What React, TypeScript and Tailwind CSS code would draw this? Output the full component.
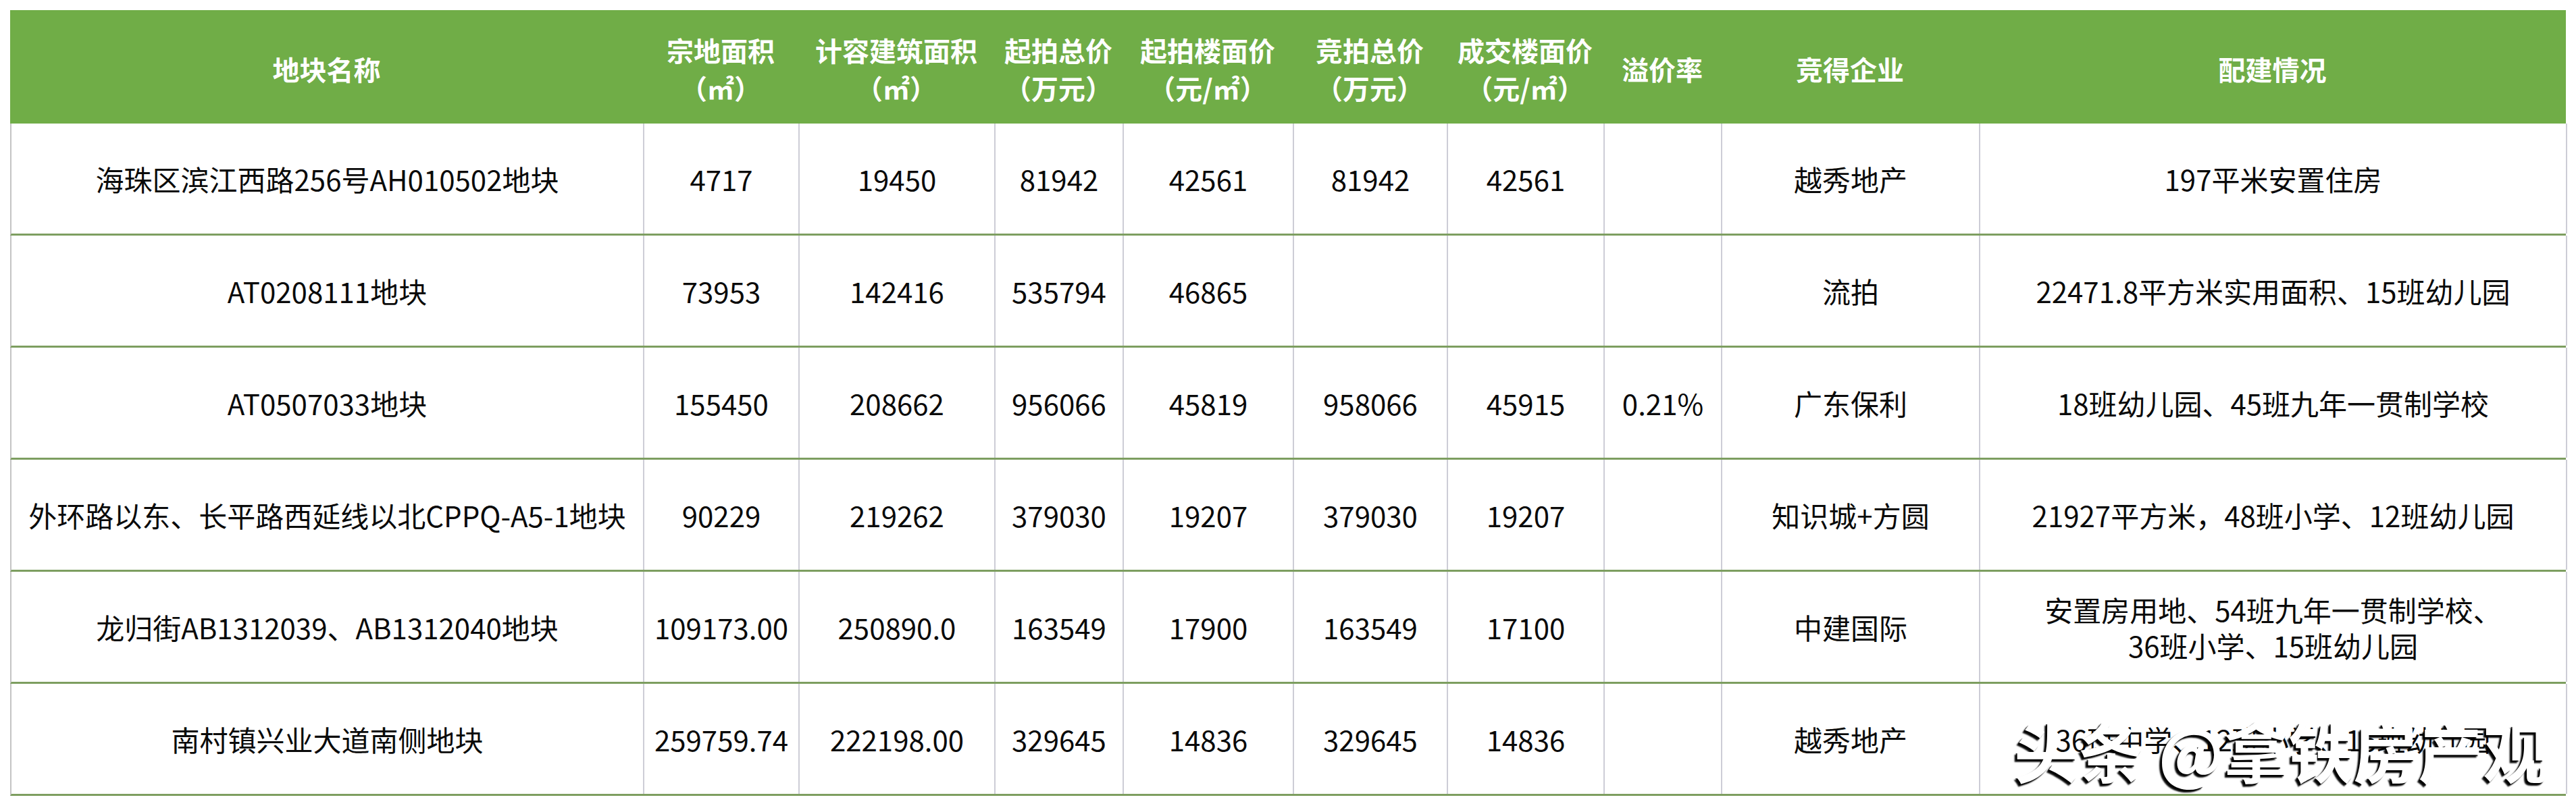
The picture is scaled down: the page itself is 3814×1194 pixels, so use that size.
import React from 'react';

type Row = {
  name: string;
  area: string;
  floorArea: string;
  startTotal: string;
  startUnit: string;
  dealTotal: string;
  dealUnit: string;
  premium: string;
  winner: string;
  extras: string[];
};

const rows: Row[] = [
  { name: '海珠区滨江西路256号AH010502地块', area: '4717', floorArea: '19450', startTotal: '81942', startUnit: '42561', dealTotal: '81942', dealUnit: '42561', premium: '', winner: '越秀地产', extras: ['197平米安置住房'] },
  { name: 'AT0208111地块', area: '73953', floorArea: '142416', startTotal: '535794', startUnit: '46865', dealTotal: '', dealUnit: '', premium: '', winner: '流拍', extras: ['22471.8平方米实用面积、15班幼儿园'] },
  { name: 'AT0507033地块', area: '155450', floorArea: '208662', startTotal: '956066', startUnit: '45819', dealTotal: '958066', dealUnit: '45915', premium: '0.21%', winner: '广东保利', extras: ['18班幼儿园、45班九年一贯制学校'] },
  { name: '外环路以东、长平路西延线以北CPPQ-A5-1地块', area: '90229', floorArea: '219262', startTotal: '379030', startUnit: '19207', dealTotal: '379030', dealUnit: '19207', premium: '', winner: '知识城+方圆', extras: ['21927平方米，48班小学、12班幼儿园'] },
  { name: '龙归街AB1312039、AB1312040地块', area: '109173.00', floorArea: '250890.0', startTotal: '163549', startUnit: '17900', dealTotal: '163549', dealUnit: '17100', premium: '', winner: '中建国际', extras: ['安置房用地、54班九年一贯制学校、', '36班小学、15班幼儿园'] },
  { name: '南村镇兴业大道南侧地块', area: '259759.74', floorArea: '222198.00', startTotal: '329645', startUnit: '14836', dealTotal: '329645', dealUnit: '14836', premium: '', winner: '越秀地产', extras: ['36班中学、12班小学、15班幼儿园'] },
];

const headers: string[][] = [
  ['地块名称'],
  ['宗地面积', '（㎡）'],
  ['计容建筑面积', '（㎡）'],
  ['起拍总价', '（万元）'],
  ['起拍楼面价', '（元/㎡）'],
  ['竞拍总价', '（万元）'],
  ['成交楼面价', '（元/㎡）'],
  ['溢价率'],
  ['竞得企业'],
  ['配建情况'],
];

const cols = 'grid grid-cols-[937px_230px_290px_190px_252px_228px_232px_174px_382px_869px]';

function Cell({ children }: { children?: React.ReactNode }) {
  return (
    <div className="relative flex flex-col items-center justify-center text-center border-r-2 border-[#cdcdd6]">
      {children}
    </div>
  );
}

export default function App() {
  return (
    <div className="w-[3814px] h-[1194px] bg-white pt-[15px] pl-[15px] font-['Noto_Sans_CJK_SC','Noto_Sans',sans-serif]">
      <div className="w-[3784px]">
        {/* header */}
        <div className={`${cols} h-[168px] bg-[#70ad47] text-white font-bold text-[40px] leading-[56px]`}>
          {headers.map((h, i) => (
            <div key={i} className="flex flex-col items-center justify-center text-center pt-[6px]">
              {h.map((line) => (
                <span key={line}>{line}</span>
              ))}
            </div>
          ))}
        </div>

        {rows.map((r, i) => (
          <div key={i} className={`${cols} h-[166px] border-b-[3px] border-l-2 border-b-[#7d9e60] border-l-[#c4c4c4] text-[42px] leading-[53px] text-[#0a0a0a]`}>
            <Cell>{r.name}</Cell>
            <Cell>{r.area}</Cell>
            <Cell>{r.floorArea}</Cell>
            <Cell>{r.startTotal}</Cell>
            <Cell>{r.startUnit}</Cell>
            <Cell>{r.dealTotal}</Cell>
            <Cell>{r.dealUnit}</Cell>
            <Cell>{r.premium}</Cell>
            <Cell>{r.winner}</Cell>
            <Cell>
              {r.extras.map((e) => (
                <span key={e}>{e}</span>
              ))}
              {i === rows.length - 1 && (
                <div className="absolute left-[50px] top-[50px] whitespace-nowrap text-[96px] leading-none font-bold text-white [text-shadow:-4px_4px_2px_rgba(0,0,0,0.95),-2px_2px_1px_rgba(0,0,0,0.9)]">
                  头条 @拿铁房产观
                </div>
              )}
            </Cell>
          </div>
        ))}
      </div>
    </div>
  );
}
